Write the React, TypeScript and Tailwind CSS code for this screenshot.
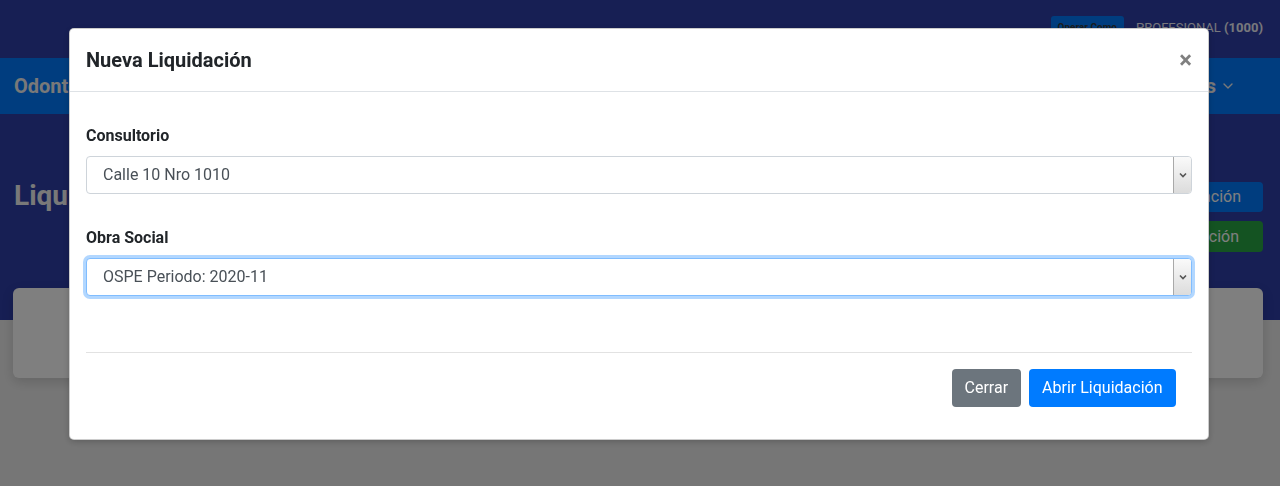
import { ChevronDown } from 'lucide-react';

const font = { fontFamily: 'Roboto, "Liberation Sans", sans-serif' };

// fake native select with old-style arrow button
const SelectBox = ({ value, focused }: { value: string; focused?: boolean }) => (
  <div
    className={`relative flex h-[38px] items-center rounded-[4px] border bg-white pl-4 text-[16px] text-[#495057] ${
      focused ? 'border-[#80bdff] shadow-[0_0_0_3px_rgba(0,123,255,0.3)]' : 'border-[#ced4da]'
    }`}
  >
    <span className="flex-1 truncate">{value}</span>
    <div className="flex h-full w-[18px] items-center justify-center rounded-r-[3px] border-l border-[#a9a9a9] bg-gradient-to-b from-[#fafafa] to-[#dcdcdc]">
      <svg width="8" height="6" viewBox="0 0 8 6">
        <path d="M1 1.5 L4 4.5 L7 1.5" fill="none" stroke="#555" strokeWidth="1.6" />
      </svg>
    </div>
  </div>
);

export default function App() {
  return (
    <div className="relative h-[486px] overflow-hidden bg-[#ededed]" style={font}>
      {/* PAGE UNDER THE BACKDROP */}
      <div className="flex h-[58px] items-start justify-end gap-3 bg-[#2e3ea8] pr-[17px] pt-4">
        <button className="h-[22px] rounded-[3px] bg-[#007bff] px-[7px] text-[10px] font-bold text-[#343a40]">
          Operar Como
        </button>
        <span className="pt-[4px] text-[13px] leading-4 text-[#f0f0f8]">
          PROFESIONAL <b>(1000)</b>
        </span>
      </div>
      <div className="flex h-[56px] items-center justify-between bg-[#007bff] px-[14px]">
        <span className="text-[20px] font-bold text-[#f2f2f2]">Odontología</span>
        <span className="flex items-center gap-1 pr-[30px] text-[20px] font-bold text-[#f2f2f2]">
          Mis Datos
          <ChevronDown size={16} />
        </span>
      </div>
      <div className="flex h-[206px] items-start justify-between bg-[#2e3ea8] pl-[14px] pr-[17px] pt-[68px]">
        <h3 className="text-[28px] font-bold leading-[28px] text-[#f2f2f2]">Liquidaciones</h3>
        <div className="flex flex-col items-end gap-[9px]">
          <button className="h-[30px] rounded-[4px] bg-[#007bff] px-[22px] text-[16px] text-white">
            Nueva Liquidación
          </button>
          <button className="h-[31px] rounded-[4px] bg-[#28a745] px-[24px] text-[16px] text-white">
            Abrir Liquidación
          </button>
        </div>
      </div>
      <div className="px-[13px] pr-[17px]">
        <div className="-mt-[32px] h-[90px] rounded-md bg-white shadow-[0_4px_12px_rgba(0,0,0,0.15)]" />
      </div>

      {/* BACKDROP */}
      <div className="fixed inset-0 bg-black/50" />

      {/* MODAL */}
      <div className="fixed inset-0 pl-[69px] pt-[28px]">
        <div className="w-[1140px] rounded-[5px] border border-black/20 bg-white shadow-[0_2px_6px_rgba(0,0,0,0.2)]">
          <div className="flex h-[63px] items-center justify-between border-b border-[#dee2e6] px-4">
            <h5 className="text-[20px] font-bold leading-6 text-[#212529]">Nueva Liquidación</h5>
            <button className="pl-1 text-[24px] font-bold leading-none text-black/50">×</button>
          </div>

          <div className="px-4 pt-8">
            <label className="block text-[16px] font-bold leading-6 text-[#212529]">Consultorio</label>
            <div className="mt-2">
              <SelectBox value="Calle 10 Nro 1010" />
            </div>

            <label className="mt-8 block text-[16px] font-bold leading-6 text-[#212529]">Obra Social</label>
            <div className="mt-2">
              <SelectBox value="OSPE Periodo: 2020-11" focused />
            </div>

            <div className="mt-[56px] h-px bg-[#e2e2e2]" />

            <div className="flex justify-end gap-2 px-4 pb-8 pt-4">
              <button className="h-[38px] rounded-[4px] bg-[#6c757d] px-[12.5px] text-[16px] text-white">Cerrar</button>
              <button className="h-[38px] rounded-[4px] bg-[#007bff] px-[13.5px] text-[16px] text-white">
                Abrir Liquidación
              </button>
            </div>
          </div>
        </div>
      </div>
    </div>
  );
}
